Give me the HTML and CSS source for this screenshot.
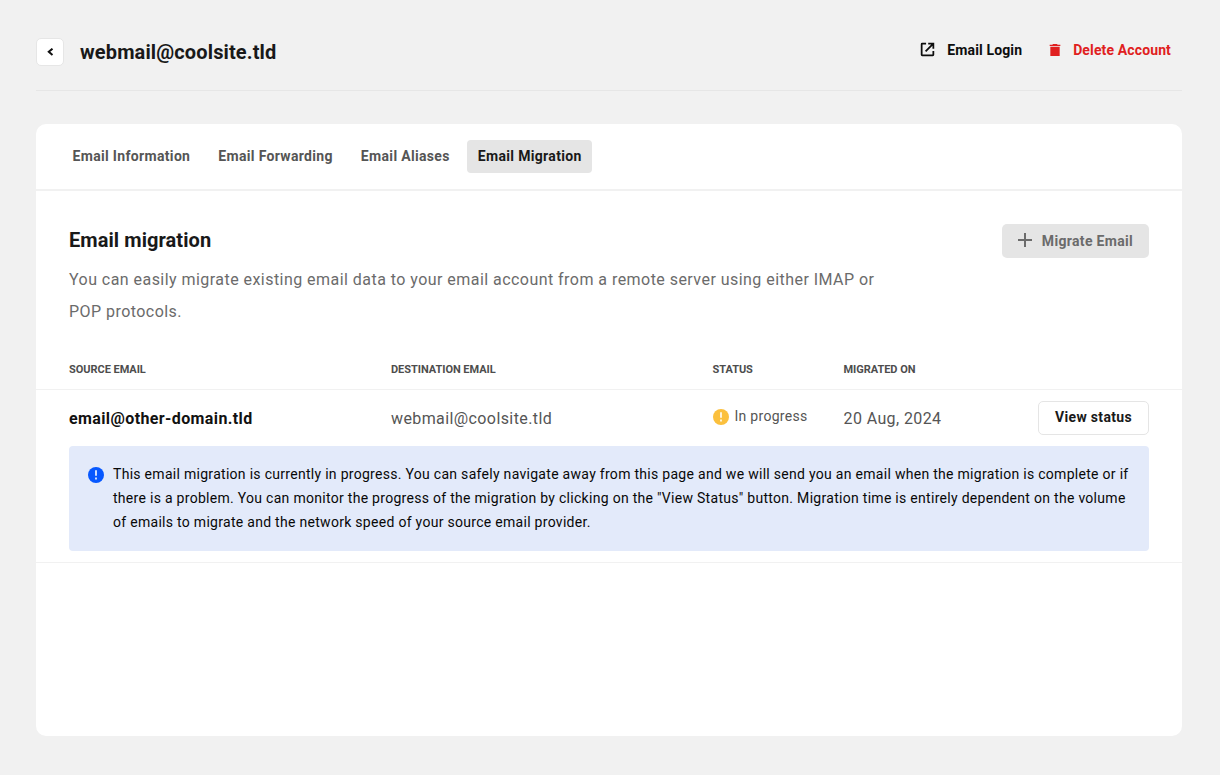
FILE: index.html
```html
<!DOCTYPE html>
<html lang="en">
<head>
    <meta charset="UTF-8">
    <title>Email Migration</title>
    <link rel="stylesheet" href="styles.css">
</head>
<body>
    <div class="page">
        <header class="page-header">
            <a href="#" class="back-btn" aria-label="Back">
                <svg width="8" height="8" viewBox="0 0 8 8"><path d="M6.500 .7L2.800 3.800l3.700 3.100" fill="none" stroke="#111" stroke-width="2"/></svg>
            </a>
            <h1>webmail@coolsite.tld</h1>
            <nav class="actions">
                <a href="#" class="login">
                    <svg width="17" height="17" viewBox="0 0 24 24"><path fill="currentColor" d="M19 19H5V5h5V2.500H4.500a2 2 0 0 0-2 2v15a2 2 0 0 0 2 2h15a2 2 0 0 0 2-2V14H19v5zM13 2.500V5h4.200l-8.800 8.800 1.800 1.800L19 6.800V11h2.500V2.500z"/></svg>
                    <span>Email Login</span>
                </a>
                <a href="#" class="delete">
                    <svg width="16" height="16" viewBox="0 0 24 24"><path fill="currentColor" d="M5 21h14V7H5v14zM20 4h-4l-1-1H9L8 4H4v2h16V4z"/></svg>
                    <span>Delete Account</span>
                </a>
            </nav>
        </header>

        <main class="card">
            <nav class="tabs">
                <a href="#">Email Information</a>
                <a href="#">Email Forwarding</a>
                <a href="#">Email Aliases</a>
                <a href="#" class="active">Email Migration</a>
            </nav>

            <section class="intro">
                <div class="intro-text">
                    <h2>Email migration</h2>
                    <p>You can easily migrate existing email data to your email account from a remote server using either IMAP or POP protocols.</p>
                </div>
                <button class="btn btn-disabled" disabled>
                    <svg width="14" height="14" viewBox="0 0 14 14"><path d="M7 0v14M0 7h14" stroke="currentColor" stroke-width="2"/></svg>
                    <span>Migrate Email</span>
                </button>
            </section>

            <section class="migrations">
                <div class="row row-head">
                    <div>Source Email</div>
                    <div>Destination Email</div>
                    <div>Status</div>
                    <div>Migrated On</div>
                </div>
                <div class="row row-data">
                    <div class="source">email@other-domain.tld</div>
                    <div>webmail@coolsite.tld</div>
                    <div class="status">
                        <svg width="16" height="16" viewBox="0 0 16 16"><circle cx="8" cy="8" r="8" fill="#fbc03d"/><path d="M8 3.300v5.500M8 10.500v1.900" stroke="#fff" stroke-width="1.600"/></svg>
                        <span>In progress</span>
                    </div>
                    <div>20 Aug, 2024</div>
                    <button class="btn btn-outline">View status</button>
                </div>
                <div class="notice">
                    <svg width="16" height="16" viewBox="0 0 16 16"><circle cx="8" cy="8" r="8" fill="#0758ff"/><path d="M8 3.300v5.500M8 10.500v1.900" stroke="#fff" stroke-width="1.600"/></svg>
                    <p>This email migration is currently in progress. You can safely navigate away from this page and we will send you an email when the migration is complete or if there is a problem. You can monitor the progress of the migration by clicking on the "View Status" button. Migration time is entirely dependent on the volume of emails to migrate and the network speed of your source email provider.</p>
                </div>
            </section>
        </main>
    </div>
</body>
</html>
```

FILE: styles.css
```css
* {
    box-sizing: border-box;
}

body {
    margin: 0;
    background-color: #f1f1f1;
    font-family: Roboto, sans-serif;
    color: #191919;
}

h1, h2, p {
    margin: 0;
}

a {
    color: inherit;
    text-decoration: none;
}

svg {
    display: block;
    flex-shrink: 0;
}

.page {
    width: 1146px;
    margin-left: 36px;
}

/* header */
.page-header {
    display: flex;
    align-items: center;
    height: 91px;
    padding: 13px 11px 0 0;
    border-bottom: 1px solid #e6e6e6;
}

.back-btn {
    display: flex;
    align-items: center;
    justify-content: center;
    width: 28px;
    height: 28px;
    margin-right: 16px;
    background-color: #fff;
    border: 1px solid #e6e6e6;
    border-radius: 5px;
}

h1 {
    font-size: 20px;
    font-weight: 700;
    line-height: 28px;
    letter-spacing: 0.13px;
}

.actions {
    display: flex;
    gap: 25px;
    margin: 0 0 4px auto;
    font-size: 14px;
    font-weight: 700;
    line-height: 20px;
    letter-spacing: 0.13px;
}

.actions a {
    display: flex;
    align-items: center;
    gap: 10px;
}

.login {
    color: #0d0d0d;
}

.login svg {
    margin: 0 1px 1px 0;
}

.delete {
    color: #e02020;
}

/* card */
.card {
    height: 612px;
    margin-top: 33px;
    background-color: #fff;
    border-radius: 10px;
}

.tabs {
    display: flex;
    gap: 7px;
    height: 67px;
    padding: 16px 26px;
    border-bottom: 2px solid #f1f1f1;
}

.tabs a {
    padding: 0 10.5px;
    height: 33px;
    border-radius: 4px;
    color: #555;
    font-size: 14px;
    font-weight: 700;
    line-height: 33px;
    letter-spacing: 0.33px;
}

.tabs .active {
    background-color: #e5e5e5;
    color: #191919;
}

.intro {
    display: flex;
    align-items: flex-start;
    justify-content: space-between;
    padding: 33px 33px 0;
}

.intro-text {
    width: 822px;
}

h2 {
    font-size: 20px;
    font-weight: 700;
    line-height: 32px;
    letter-spacing: 0.07px;
}

.intro p {
    margin-top: 8px;
    color: #6b6b6b;
    font-size: 16px;
    line-height: 32px;
    letter-spacing: 0.455px;
}

.btn {
    display: flex;
    align-items: center;
    justify-content: center;
    height: 34px;
    border: none;
    border-radius: 5px;
    font-family: inherit;
    font-size: 14px;
    font-weight: 700;
    letter-spacing: 0.33px;
}

.btn-disabled {
    gap: 10px;
    width: 147px;
    padding: 0;
    background-color: #e5e5e5;
    color: #6b6b6b;
}

.btn-disabled svg {
    margin-bottom: 2px;
}

.btn-outline {
    width: 111px;
    padding-bottom: 3px;
    background-color: #fff;
    border: 1px solid #e5e5e5;
    color: #191919;
}

/* table */
.migrations {
    margin-top: 21px;
    border-bottom: 1px solid #f1f1f1;
    padding-bottom: 11px;
}

.row {
    display: grid;
    grid-template-columns: 322px 321.5px 131px 1fr auto;
    align-items: center;
    padding: 0 33px;
}

.row-head {
    height: 41px;
    border-bottom: 1px solid #f1f1f1;
    color: #4d4d4d;
    font-size: 11px;
    font-weight: 700;
    letter-spacing: -0.04px;
    text-transform: uppercase;
}

.row-data {
    height: 56px;
    color: #555;
    font-size: 16px;
    letter-spacing: 0.4px;
}

.source {
    color: #111;
    font-weight: 700;
    letter-spacing: 0.39px;
}

.status {
    display: flex;
    align-items: center;
    gap: 6px;
    padding-bottom: 3px;
    font-size: 14px;
    letter-spacing: 0.28px;
}

.status span {
    margin-bottom: 2px;
}

.notice {
    display: flex;
    gap: 9px;
    height: 105px;
    margin: 0 33px;
    padding: 16px 19px;
    background-color: #e3eafa;
    border-radius: 4px;
}

.notice svg {
    margin-top: 5px;
}

.notice p {
    color: #080808;
    font-size: 14px;
    line-height: 24px;
    letter-spacing: 0.29px;
}
```
